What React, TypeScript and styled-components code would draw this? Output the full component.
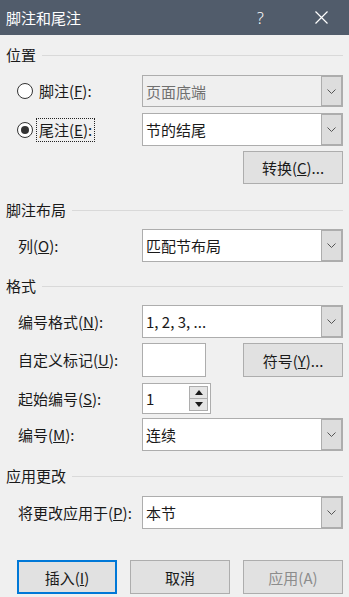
import React from 'react';
import styled, { createGlobalStyle } from 'styled-components';

const GlobalStyle = createGlobalStyle`
  html, body {
    margin: 0;
    padding: 0;
    background: #f0f0f0;
  }
  * {
    box-sizing: border-box;
  }
`;

const Dialog = styled.div`
  width: 349px;
  height: 597px;
  background: #f0f0f0;
  font-family: "Noto Sans CJK SC", "Noto Sans", sans-serif;
  font-size: 15px;
  color: #1a1a1a;
  display: flex;
  flex-direction: column;
  overflow: hidden;
`;

const TitleBar = styled.div`
  height: 35px;
  background: #515c6b;
  color: #ffffff;
  display: flex;
  align-items: center;
  padding-left: 6px;
  flex-shrink: 0;
`;

const TitleText = styled.div`
  flex: 1;
  font-size: 15px;
  line-height: 20px;
`;

const HelpMark = styled.div`
  width: 58px;
  font-family: "Noto Sans", sans-serif;
  font-size: 16px;
  font-weight: 300;
  text-align: left;
`;

const CloseBox = styled.div`
  width: 34px;
  height: 35px;
  display: flex;
  align-items: center;
  justify-content: flex-start;
`;

const Content = styled.div`
  display: flex;
  flex-direction: column;
  padding: 0 6px;
`;

const SectionHeader = styled.div<{ $mt: number }>`
  display: flex;
  align-items: center;
  gap: 6px;
  height: 16px;
  margin-top: ${p => p.$mt}px;
  line-height: 16px;

  &::after {
    content: '';
    flex: 1;
    height: 1px;
    background: #d9d9d9;
  }
`;

const Row = styled.div<{ $mt: number; $h?: number }>`
  display: flex;
  align-items: center;
  height: ${p => p.$h ?? 32}px;
  margin-top: ${p => p.$mt}px;
  padding-left: 11px;
`;

const LabelCell = styled.div`
  width: 125px;
  display: flex;
  align-items: center;
  white-space: nowrap;
  flex-shrink: 0;
`;

const Label = styled.span<{ $focus?: boolean }>`
  line-height: 20px;
  padding: 1px 2px;
  margin-left: -2px;
  border: 1px dotted ${p => (p.$focus ? '#222' : 'transparent')};
`;

const Radio = styled.span<{ $checked?: boolean }>`
  width: 16px;
  height: 16px;
  border-radius: 50%;
  border: 1px solid #333;
  background: #fff;
  margin-right: 5px;
  display: flex;
  align-items: center;
  justify-content: center;
  flex-shrink: 0;

  &::after {
    content: '';
    width: 8px;
    height: 8px;
    border-radius: 50%;
    background: ${p => (p.$checked ? '#333' : 'transparent')};
  }
`;

const Combo = styled.div<{ $disabled?: boolean }>`
  width: 201px;
  height: 100%;
  display: flex;
  background: ${p => (p.$disabled ? '#efefef' : '#ffffff')};
  color: ${p => (p.$disabled ? '#707070' : '#1a1a1a')};
`;

const ComboText = styled.div`
  flex: 1;
  border: 1px solid #adadad;
  border-right: none;
  padding-left: 3px;
  display: flex;
  align-items: center;
`;

const ComboButton = styled.div`
  width: 22px;
  background: #dddddd;
  border: 2px solid #adadad;
  border-left-width: 1px;
  display: flex;
  align-items: center;
  justify-content: center;
`;

const Button = styled.button<{ $default?: boolean; $disabled?: boolean }>`
  width: 100px;
  height: 100%;
  background: #e1e1e1;
  border: ${p => (p.$default ? '2px solid #0078d7' : '1px solid #adadad')};
  font-family: inherit;
  font-size: 15px;
  color: ${p => (p.$disabled ? '#8c8c8c' : '#1a1a1a')};
  padding: 0;
  display: flex;
  align-items: center;
  justify-content: center;
`;

const RightButtonRow = styled.div<{ $mt: number }>`
  display: flex;
  justify-content: flex-end;
  height: 33px;
  margin-top: ${p => p.$mt}px;
`;

const TextBox = styled.div<{ $w: number }>`
  width: ${p => p.$w}px;
  height: 100%;
  background: #ffffff;
  border: 1px solid #adadad;
  display: flex;
  align-items: center;
  padding-left: 4px;
`;

const Spacer = styled.div`
  flex: 1;
`;

const Spinner = styled.div`
  width: 69px;
  height: 100%;
  background: #ffffff;
  border: 1px solid #adadad;
  display: flex;
  align-items: center;
  padding: 2px 2px 2px 3px;
`;

const SpinButtons = styled.div`
  width: 19px;
  height: 100%;
  display: flex;
  flex-direction: column;
`;

const SpinButton = styled.div`
  flex: 1;
  background: #e5e5e5;
  border: 1px solid #adadad;
  display: flex;
  align-items: center;
  justify-content: center;

  & + & {
    border-top: none;
  }
`;

const Footer = styled.div`
  display: flex;
  justify-content: flex-end;
  gap: 13px;
  height: 34px;
  margin-top: 31px;
`;

const Chevron = () => (
  <svg width="9" height="5" viewBox="0 0 9 5">
    <polyline points="0.5,0.5 4.5,4.5 8.5,0.5" fill="none" stroke="#555" strokeWidth="1" />
  </svg>
);

const Arrow = ({ up }: { up?: boolean }) => (
  <svg width="8" height="5" viewBox="0 0 8 5">
    <polygon points={up ? '0,5 8,5 4,0' : '0,0 8,0 4,5'} fill="#1a1a1a" />
  </svg>
);

const ComboBox: React.FC<{ value: string; disabled?: boolean }> = ({ value, disabled }) => (
  <Combo $disabled={disabled}>
    <ComboText>{value}</ComboText>
    <ComboButton>
      <Chevron />
    </ComboButton>
  </Combo>
);

export default function App() {
  return (
    <>
      <GlobalStyle />
      <Dialog>
        <TitleBar>
          <TitleText>脚注和尾注</TitleText>
          <HelpMark>?</HelpMark>
          <CloseBox>
            <svg width="13" height="13" viewBox="0 0 13 13">
              <path d="M0.5 0.5 L12.5 12.5 M12.5 0.5 L0.5 12.5" stroke="#fff" strokeWidth="1.2" />
            </svg>
          </CloseBox>
        </TitleBar>

        <Content>
          <SectionHeader $mt={12}>位置</SectionHeader>
          <Row $mt={12}>
            <LabelCell>
              <Radio />
              <Label>脚注(<u>F</u>):</Label>
            </LabelCell>
            <ComboBox value="页面底端" disabled />
          </Row>
          <Row $mt={6} $h={33}>
            <LabelCell>
              <Radio $checked />
              <Label $focus>尾注(<u>E</u>):</Label>
            </LabelCell>
            <ComboBox value="节的结尾" />
          </Row>
          <RightButtonRow $mt={5}>
            <Button>转换(<u>C</u>)...</Button>
          </RightButtonRow>

          <SectionHeader $mt={18}>脚注布局</SectionHeader>
          <Row $mt={11} $h={33}>
            <LabelCell>
              <Label>列(<u>O</u>):</Label>
            </LabelCell>
            <ComboBox value="匹配节布局" />
          </Row>

          <SectionHeader $mt={16}>格式</SectionHeader>
          <Row $mt={11} $h={33}>
            <LabelCell>
              <Label>编号格式(<u>N</u>):</Label>
            </LabelCell>
            <ComboBox value="1, 2, 3, ..." />
          </Row>
          <Row $mt={5} $h={34}>
            <LabelCell>
              <Label>自定义标记(<u>U</u>):</Label>
            </LabelCell>
            <TextBox $w={64} />
            <Spacer />
            <Button>符号(<u>Y</u>)...</Button>
          </Row>
          <Row $mt={6} $h={31}>
            <LabelCell>
              <Label>起始编号(<u>S</u>):</Label>
            </LabelCell>
            <Spinner>
              <Spacer>1</Spacer>
              <SpinButtons>
                <SpinButton>
                  <Arrow up />
                </SpinButton>
                <SpinButton>
                  <Arrow />
                </SpinButton>
              </SpinButtons>
            </Spinner>
          </Row>
          <Row $mt={4} $h={33}>
            <LabelCell>
              <Label>编号(<u>M</u>):</Label>
            </LabelCell>
            <ComboBox value="连续" />
          </Row>

          <SectionHeader $mt={17}>应用更改</SectionHeader>
          <Row $mt={12} $h={33}>
            <LabelCell>
              <Label>将更改应用于(<u>P</u>):</Label>
            </LabelCell>
            <ComboBox value="本节" />
          </Row>

          <Footer>
            <Button $default>插入(<u>I</u>)</Button>
            <Button>取消</Button>
            <Button $disabled>应用(A)</Button>
          </Footer>
        </Content>
      </Dialog>
    </>
  );
}
